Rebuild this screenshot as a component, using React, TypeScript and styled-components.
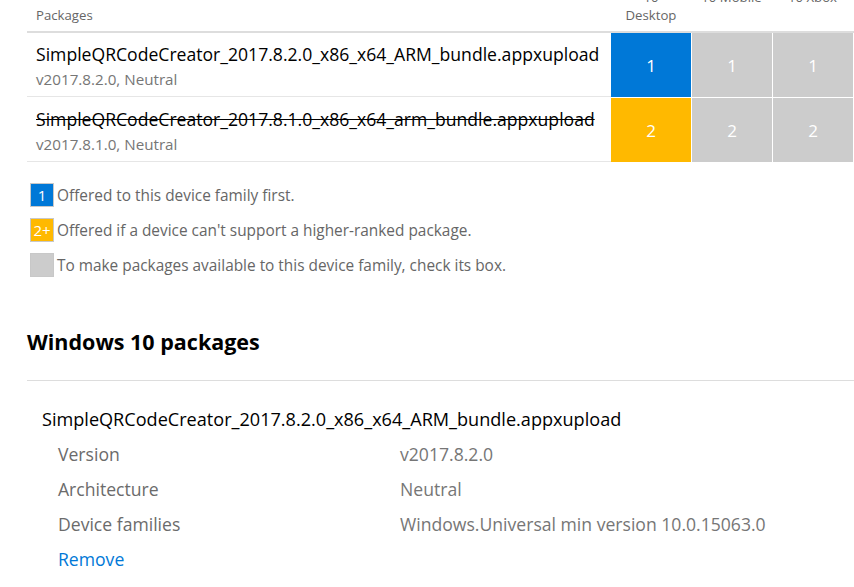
import React from 'react';
import styled, { createGlobalStyle } from 'styled-components';

const GlobalStyle = createGlobalStyle`
  body {
    margin: 0;
    background: #fff;
    font-family: "Open Sans", "Noto Sans", sans-serif;
    overflow: hidden;
  }
`;

const Page = styled.div`
  margin-top: -21px; // page is scrolled a little
  padding-left: 27px;
`;

const Grid = styled.div`
  display: grid;
  grid-template-columns: 584px 80px 81px 81px;
`;

const HeadRow = styled(Grid)`
  border-bottom: 2px solid #ddd;
`;

const HeadCell = styled.div<{ $center?: boolean }>`
  padding: 9px ${(p) => (p.$center ? '0' : '9px')} 7px;
  font-size: 13.2px;
  line-height: 18px;
  color: #666;
  text-align: ${(p) => (p.$center ? 'center' : 'left')};
  align-self: ${(p) => (p.$center ? 'start' : 'end')};
  white-space: nowrap;
`;

const PkgCell = styled.div`
  height: 64px;
  padding: 8px 9px 0;
  box-sizing: border-box;
  border-bottom: 1px solid #e6e6e6;
`;

const PkgName = styled.div<{ $old?: boolean }>`
  font-size: 17.6px;
  line-height: 26px;
  color: #000;
  text-decoration: ${(p) => (p.$old ? 'line-through' : 'none')};
  white-space: nowrap;
`;

const PkgSub = styled.div`
  margin-top: 2px;
  font-size: 15.2px;
  line-height: 20px;
  color: #767676;
`;

const DeviceCell = styled.div<{ $bg: string; $first?: boolean }>`
  height: 64px;
  display: flex;
  align-items: center;
  justify-content: center;
  background: ${(p) => p.$bg};
  color: #fff;
  font-size: 17px;
  border-bottom: 1px solid #fff;
  border-left: ${(p) => (p.$first ? 'none' : '1px solid #fff')};
`;

const Legend = styled.div`
  margin-top: 20px;
  padding-left: 3px;
  display: flex;
  flex-direction: column;
  gap: 11px;
`;

const LegendRow = styled.div`
  display: flex;
  align-items: center;
  gap: 3px;
`;

const LegendBox = styled.div<{ $bg: string }>`
  width: 24px;
  height: 24px;
  box-sizing: border-box;
  border: 1px solid #c8c8c8;
  background: ${(p) => p.$bg};
  color: #fff;
  font-size: 15px;
  display: flex;
  align-items: center;
  justify-content: center;
`;

const LegendText = styled.span`
  font-size: 15.4px;
  color: #666;
`;

const Heading = styled.h2`
  margin: 50px 0 0;
  padding-bottom: 23px;
  font-size: 21.5px;
  line-height: 30px;
  font-weight: 700;
  color: #000;
  border-bottom: 1px solid #ddd;
`;

const Detail = styled.div`
  padding: 26px 0 0 15px;
`;

const DetailName = styled.div`
  font-size: 18.1px;
  line-height: 24px;
  color: #000;
  margin-bottom: 6px;
  white-space: nowrap;
`;

const Props = styled.div`
  display: grid;
  grid-template-columns: 342px 1fr;
  padding-left: 16px;
  font-size: 17.6px;
  line-height: 35px;
`;

const PropLabel = styled.div`
  color: #6b6b6b;
`;

const PropValue = styled.div`
  color: #767676;
`;

const RemoveLink = styled.a`
  color: #0078d7;
  text-decoration: none;
  cursor: pointer;
`;

const BLUE = '#0078d7';
const YELLOW = '#ffb900';
const GRAY = '#cccccc';

const packages = [
  {
    name: 'SimpleQRCodeCreator_2017.8.2.0_x86_x64_ARM_bundle.appxupload',
    sub: 'v2017.8.2.0, Neutral',
    rank: '1',
    first: BLUE,
    old: false,
  },
  {
    name: 'SimpleQRCodeCreator_2017.8.1.0_x86_x64_arm_bundle.appxupload',
    sub: 'v2017.8.1.0, Neutral',
    rank: '2',
    first: YELLOW,
    old: true,
  },
];

const App: React.FC = () => {
  return (
    <Page>
      <GlobalStyle />
      <HeadRow>
        <HeadCell>Packages</HeadCell>
        <HeadCell $center>
          10
          <br />
          Desktop
        </HeadCell>
        <HeadCell $center>10 Mobile</HeadCell>
        <HeadCell $center>10 Xbox</HeadCell>
      </HeadRow>

      {packages.map((p) => (
        <Grid key={p.name}>
          <PkgCell>
            <PkgName $old={p.old}>{p.name}</PkgName>
            <PkgSub>{p.sub}</PkgSub>
          </PkgCell>
          <DeviceCell $bg={p.first} $first>
            {p.rank}
          </DeviceCell>
          <DeviceCell $bg={GRAY}>{p.rank}</DeviceCell>
          <DeviceCell $bg={GRAY}>{p.rank}</DeviceCell>
        </Grid>
      ))}

      <Legend>
        <LegendRow>
          <LegendBox $bg={BLUE}>1</LegendBox>
          <LegendText>Offered to this device family first.</LegendText>
        </LegendRow>
        <LegendRow>
          <LegendBox $bg={YELLOW}>2+</LegendBox>
          <LegendText>Offered if a device can't support a higher-ranked package.</LegendText>
        </LegendRow>
        <LegendRow>
          <LegendBox $bg={GRAY} />
          <LegendText>To make packages available to this device family, check its box.</LegendText>
        </LegendRow>
      </Legend>

      <Heading>Windows 10 packages</Heading>

      <Detail>
        <DetailName>SimpleQRCodeCreator_2017.8.2.0_x86_x64_ARM_bundle.appxupload</DetailName>
        <Props>
          <PropLabel>Version</PropLabel>
          <PropValue>v2017.8.2.0</PropValue>
          <PropLabel>Architecture</PropLabel>
          <PropValue>Neutral</PropValue>
          <PropLabel>Device families</PropLabel>
          <PropValue>Windows.Universal min version 10.0.15063.0</PropValue>
          <div>
            <RemoveLink>Remove</RemoveLink>
          </div>
        </Props>
      </Detail>
    </Page>
  );
};

export default App;
